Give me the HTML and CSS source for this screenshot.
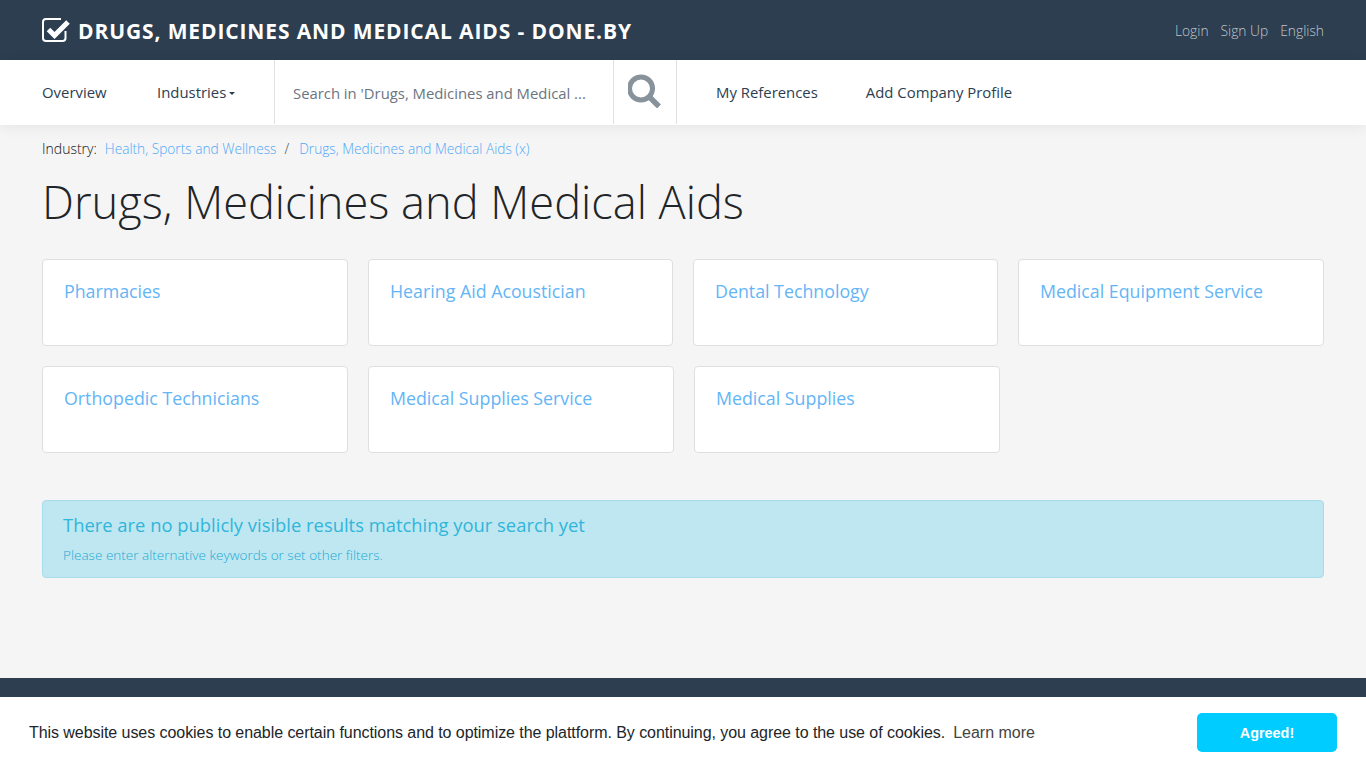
FILE: index.html
```html
<!DOCTYPE html>
<html lang="en">
<head>
<meta charset="utf-8">
<title>Drugs, Medicines and Medical Aids - done.by</title>
<link rel="stylesheet" href="styles.css">
</head>
<body>
<header class="topbar">
  <a class="brand" href="#">
    <svg class="brand-icon" viewBox="0 0 29 24" width="29" height="24" aria-hidden="true">
      <path d="M23.5 13v7a3 3 0 0 1-3 3H4a3 3 0 0 1-3-3V4a3 3 0 0 1 3-3h15" fill="none" stroke="#fff" stroke-width="2"/>
      <path d="M6.5 11.5l6 6L26 4" fill="none" stroke="#fff" stroke-width="5"/>
    </svg>
    <span class="brand-text">DRUGS, MEDICINES AND MEDICAL AIDS - DONE.BY</span>
  </a>
  <nav class="toplinks">
    <a href="#">Login</a>
    <a href="#">Sign Up</a>
    <a href="#">English</a>
  </nav>
</header>
<nav class="mainnav">
  <a class="nav-link nav-overview" href="#">Overview</a>
  <a class="nav-link nav-industries" href="#">Industries<span class="caret"></span></a>
  <div class="search-box">Search in 'Drugs, Medicines and Medical ...</div>
  <button class="search-btn" aria-label="Search">
    <svg viewBox="0 0 34 34" width="34" height="34" aria-hidden="true">
      <circle cx="13" cy="14.5" r="11.5" fill="none" stroke="#88929b" stroke-width="5"/>
      <path d="M22 23.5l9 9" stroke="#88929b" stroke-width="5.5"/>
    </svg>
  </button>
  <a class="nav-link nav-refs" href="#">My References</a>
  <a class="nav-link" href="#">Add Company Profile</a>
</nav>
<main class="content">
  <div class="crumbs">
    <span class="crumb-label">Industry:</span>
    <a href="#">Health, Sports and Wellness</a>
    <span class="crumb-sep">/</span>
    <a href="#">Drugs, Medicines and Medical Aids (x)</a>
  </div>
  <h1>Drugs, Medicines and Medical Aids</h1>
  <div class="cards cards-first">
    <a class="card" href="#">Pharmacies</a>
    <a class="card" href="#">Hearing Aid Acoustician</a>
    <a class="card" href="#">Dental Technology</a>
    <a class="card" href="#">Medical Equipment Service</a>
  </div>
  <div class="cards cards-second">
    <a class="card" href="#">Orthopedic Technicians</a>
    <a class="card" href="#">Medical Supplies Service</a>
    <a class="card" href="#">Medical Supplies</a>
  </div>
  <div class="notice">
    <h4>There are no publicly visible results matching your search yet</h4>
    <p>Please enter alternative keywords or set other filters.</p>
  </div>
</main>
<footer class="footer"></footer>
<div class="cookie">
  <span class="cookie-msg">This website uses cookies to enable certain functions and to optimize the plattform. By continuing, you agree to the use of cookies.</span>
  <a class="cookie-more" href="#">Learn more</a>
  <a class="cookie-btn" href="#">Agreed!</a>
</div>
</body>
</html>
```
FILE: styles.css
```css
* { box-sizing: border-box; }
html, body { margin: 0; height: 768px; overflow: hidden; }
body {
  background: #f5f5f5;
  font-family: "Open Sans", "Noto Sans", sans-serif;
  display: flex;
  flex-direction: column;
}
a { text-decoration: none; }

.topbar {
  height: 60px;
  background: #2c3e50;
  padding: 0 42px;
  display: flex;
  align-items: center;
  justify-content: space-between;
  flex: none;
}
.brand { display: flex; align-items: center; gap: 7px; color: #fff; font-size: 21px; font-weight: 700; letter-spacing: 0.88px; white-space: nowrap; }
.brand-text { padding-top: 2px; }
.brand-icon { flex: none; }
.toplinks { display: flex; gap: 12px; }
.toplinks a { color: #c0c6cc; font-size: 13.8px; font-weight: 300; }

.mainnav {
  height: 65px;
  background: #fff;
  padding-left: 42px;
  display: flex;
  align-items: stretch;
  flex: none;
  box-shadow: 0 2px 14px rgba(0,0,0,.07);
  position: relative;
  color: #2c3e50;
}
.nav-link { color: #2c3e50; font-size: 14.9px; font-weight: 400; display: flex; align-items: center; padding-bottom: 1px; white-space: nowrap; }
.nav-overview { width: 115px; }
.nav-industries { width: 117px; }
.caret { display: inline-block; margin-left: 3px; margin-top: 2px; border-top: 3px solid #2c3e50; border-left: 3.5px solid transparent; border-right: 3.5px solid transparent; }
.search-box {
  width: 340px;
  margin-bottom: 1px;
  border-left: 1px solid #e1e1e1;
  border-right: 1px solid #e1e1e1;
  padding: 1px 0 0 18px;
  display: flex;
  align-items: center;
  font-size: 14.85px;
  color: #6b7480;
  white-space: nowrap;
}
.search-btn {
  width: 63px;
  margin: 0 39px 1px 0;
  padding: 0 0 2px;
  background: none;
  border: 0;
  border-right: 1px solid #e1e1e1;
  display: flex;
  align-items: center;
  justify-content: center;
}
.nav-refs { margin-right: 48px; }

.content { flex: 1; padding: 14px 42px 0; }
.crumbs { display: flex; font-size: 13.7px; line-height: 20px; font-weight: 300; white-space: nowrap; }
.crumbs a { color: #4ea8f5; }
.crumb-label { color: #111; font-size: 14px; margin-right: 8px; }
.crumb-sep { color: #444; margin: 0 10px 0 8px; }
h1 { margin: 17px 0 31px; font-size: 45.2px; line-height: 52px; font-weight: 300; color: #212529; white-space: nowrap; }

.cards { display: grid; gap: 20px; margin-bottom: 20px; }
.cards-first { grid-template-columns: 306px 305px 305px 306px; }
.cards-second { grid-template-columns: repeat(3, 306px); }
.card {
  height: 87px;
  background: #fff;
  border: 1px solid #dfdfdf;
  border-radius: 4px;
  padding: 19px 21px;
  color: #64b5f6;
  font-size: 17.8px;
  line-height: 24px;
}
.notice {
  margin-top: 47px;
  height: 78px;
  background: #bee7f2;
  border: 1px solid #a9dcea;
  border-radius: 4px;
  padding: 12px 20px;
  color: #31b5d9;
}
.notice h4 { margin: 0; font-size: 18.4px; line-height: 24px; font-weight: 400; }
.notice p { margin: 9px 0 0; font-size: 13.55px; line-height: 18px; font-weight: 300; color: #1fa9d0; }

.footer { height: 90px; background: #2c3e50; flex: none; }
.cookie {
  position: fixed;
  left: 0; right: 0; bottom: 0;
  height: 71px;
  background: #fff;
  padding: 0 29px;
  display: flex;
  align-items: center;
  font-family: "Liberation Sans", Arial, sans-serif;
  font-size: 16px;
  color: #212529;
}
.cookie-msg { letter-spacing: -0.06px; }
.cookie-more { color: #444; margin-left: 8px; }
.cookie-btn {
  margin-left: auto;
  width: 140px;
  height: 39px;
  background: #00ccff;
  color: #fff;
  border-radius: 5px;
  font-size: 14.4px;
  font-weight: 700;
  display: flex;
  align-items: center;
  justify-content: center;
}
```
